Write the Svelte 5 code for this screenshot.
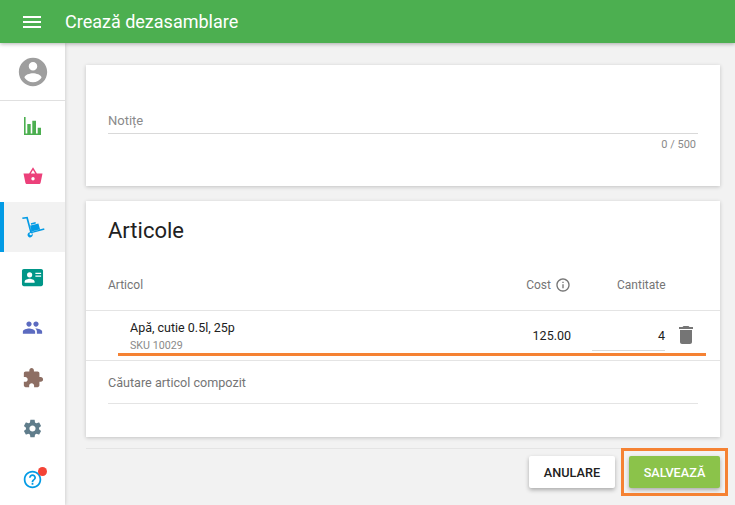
<script>
  const nav = [
    { c: '#4caf50', s: 24, nudge: true, d: 'M3 2h1.600v16.500h1.700V9h3.400v9.500h1.600V5.700H15v12.800h1.700v-5.800H20V20H3z' },
    { c: '#ec407a', s: 24, d: 'M8.100 9.500L12 3.300l3.900 6.200H21.500L19.600 18.700c-.2.8-.8 1.300-1.600 1.300H6c-.8 0-1.400-.5-1.600-1.300L2.500 9.500zM9.800 9.500h4.400L12 5.900zM12 13a1.700 1.700 0 1 0 0 3.400 1.700 1.700 0 0 0 0-3.400z' },
    { c: '#039be5', s: 24, active: true, d: 'M1.200 2.600L6.700 1.800l3.900 14.600 12.500-3.200.4 1.600-12.400 3.300a2.600 2.600 0 1 1-2-.9L5.400 3.500l-3.900.6zM9.700 17.900a1.200 1.200 0 1 0 .1 2.400 1.200 1.200 0 0 0-.1-2.400zM8.700 10.800l8.700-2.200 1.700 5.900-8.400 2.200zM9.800 8.300l4.700-1.300.4 1.500-4.700 1.300z' },
    { c: '#009688', s: 23, d: 'M3 3h18c1.100 0 2 .9 2 2v14c0 1.100-.9 2-2 2H3c-1.100 0-2-.9-2-2V5c0-1.100.9-2 2-2zm6 3.500a2.700 2.700 0 1 0 0 5.400 2.700 2.700 0 0 0 0-5.400zM3.800 17.500h10.400v-1.200c0-2-3.500-3-5.200-3s-5.200 1-5.200 3zM15 7v1.300h6V7zm0 3v1.300h6V10z' },
    { c: '#5c6bc0', s: 21, d: 'M16 11c1.660 0 2.990-1.340 2.990-3S17.660 5 16 5c-1.660 0-3 1.340-3 3s1.340 3 3 3zm-8 0c1.660 0 2.990-1.340 2.990-3S9.660 5 8 5C6.340 5 5 6.340 5 8s1.340 3 3 3zm0 2c-2.330 0-7 1.170-7 3.500V19h14v-2.500c0-2.330-4.670-3.500-7-3.500zm8 0c-.29 0-.62.02-.97.05 1.160.84 1.970 1.970 1.970 3.450V19h6v-2.500c0-2.330-4.670-3.500-7-3.500z' },
    { c: '#8d6e63', s: 22, d: 'M20.500 11H19V7c0-1.100-.9-2-2-2h-4V3.500C13 2.120 11.880 1 10.500 1S8 2.120 8 3.500V5H4c-1.100 0-1.990.9-1.990 2v3.800H3.500c1.490 0 2.700 1.210 2.700 2.700s-1.210 2.700-2.700 2.700H2V20c0 1.100.9 2 2 2h3.800v-1.500c0-1.490 1.210-2.700 2.700-2.700 1.490 0 2.700 1.210 2.700 2.700V22H17c1.100 0 2-.9 2-2v-4h1.500c1.380 0 2.500-1.120 2.500-2.500S21.880 11 20.500 11z' },
    { c: '#607d8b', s: 21, nudge: true, d: 'M19.430 12.980c.04-.32.07-.64.07-.98s-.03-.66-.07-.98l2.110-1.650c.19-.15.24-.42.12-.64l-2-3.460c-.12-.22-.39-.3-.61-.22l-2.490 1c-.52-.4-1.080-.73-1.690-.98l-.38-2.650C14.460 2.180 14.250 2 14 2h-4c-.25 0-.46.18-.49.42l-.38 2.650c-.61.25-1.170.59-1.690.98l-2.490-1c-.23-.09-.49 0-.61.22l-2 3.460c-.13.22-.07.49.12.64l2.110 1.650c-.04.32-.07.65-.07.98s.03.66.07.98l-2.110 1.650c-.19.15-.24.42-.12.64l2 3.460c.12.22.39.3.61.22l2.490-1c.52.4 1.080.73 1.690.98l.38 2.650c.03.24.24.42.49.42h4c.25 0 .46-.18.49-.42l.38-2.650c.61-.25 1.170-.59 1.690-.98l2.490 1c.23.09.49 0 .61-.22l2-3.460c.12-.22.07-.49-.12-.64l-2.110-1.650zM12 15.500c-1.930 0-3.500-1.570-3.500-3.500s1.570-3.500 3.500-3.500 3.500 1.570 3.500 3.500-1.570 3.500-3.500 3.500z' },
    { c: '#039be5', s: 21, nudge: true, badge: true, d: 'M11 18h2v-2h-2v2zm1-16C6.480 2 2 6.480 2 12s4.480 10 10 10 10-4.480 10-10S17.520 2 12 2zm0 18c-4.410 0-8-3.590-8-8s3.590-8 8-8 8 3.590 8 8-3.590 8-8 8zm0-14c-2.210 0-4 1.790-4 4h2c0-1.100.9-2 2-2s2 .9 2 2c0 2-3 1.750-3 5h2c0-2.250 3-2.500 3-5 0-2.210-1.790-4-4-4z' }
  ];
</script>

<div class="app">
  <header class="topbar">
    <svg class="menu" viewBox="0 0 24 24" width="24" height="24"><path fill="#fff" d="M3 18h18v-2H3v2zm0-5h18v-2H3v2zm0-7v2h18V6H3z" /></svg>
    <h1>Crează dezasamblare</h1>
  </header>

  <div class="body">
    <aside class="sidebar">
      <div class="profile">
        <svg viewBox="0 0 24 24" width="34" height="34"><path fill="#9e9e9e" d="M12 2C6.480 2 2 6.480 2 12s4.480 10 10 10 10-4.480 10-10S17.520 2 12 2zm0 3c1.660 0 3 1.340 3 3s-1.340 3-3 3-3-1.340-3-3 1.340-3 3-3zm0 14.200c-2.500 0-4.710-1.280-6-3.220.03-1.990 4-3.080 6-3.080 1.990 0 5.970 1.090 6 3.080-1.290 1.940-3.500 3.220-6 3.220z" /></svg>
      </div>
      {#each nav as item}
        <div class="nav-item" class:active={item.active}>
          <span class="icon" class:nudge={item.nudge}>
            <svg viewBox="0 0 24 24" width={item.s} height={item.s}><path fill={item.c} fill-rule="evenodd" d={item.d} /></svg>
            {#if item.badge}<span class="badge"></span>{/if}
          </span>
        </div>
      {/each}
    </aside>

    <main class="content">
      <section class="card notes">
        <div class="field-label">Notițe</div>
        <div class="counter">0 / 500</div>
      </section>

      <section class="card items">
        <h2>Articole</h2>
        <div class="row head">
          <span class="col-name">Articol</span>
          <span class="col-cost">Cost
            <svg viewBox="0 0 24 24" width="16" height="16"><path fill="#757575" d="M11 17h2v-6h-2v6zm1-15C6.480 2 2 6.480 2 12s4.480 10 10 10 10-4.480 10-10S17.520 2 12 2zm0 18c-4.410 0-8-3.590-8-8s3.590-8 8-8 8 3.590 8 8-3.590 8-8 8zM11 9h2V7h-2v2z" /></svg>
          </span>
          <span class="col-qty">Cantitate</span>
        </div>
        <div class="row item">
          <div class="col-name name-cell">
            <div class="name">Apă, cutie 0.5l, 25p</div>
            <div class="sku">SKU 10029</div>
          </div>
          <span class="cost-val">125.00</span>
          <span class="qty-val">4</span>
          <svg class="trash" viewBox="0 0 24 24" width="24" height="24"><path fill="#757575" d="M6 19c0 1.100.9 2 2 2h8c1.100 0 2-.9 2-2V7H6v12zM19 4h-3.500l-1-1h-5l-1 1H5v2h14V4z" /></svg>
          <span class="underline"></span>
        </div>
        <div class="search">Căutare articol compozit</div>
      </section>

      <footer class="actions">
        <button class="cancel">ANULARE</button>
        <span class="save-wrap">
          <button class="save">SALVEAZĂ</button>
          <span class="highlight"></span>
        </span>
      </footer>
    </main>
  </div>
</div>

<style>
  :global(body) {
    margin: 0;
    background: #f2f2f2;
    font-family: Roboto, "Liberation Sans", sans-serif;
    overflow: hidden;
  }
  .app {
    width: 735px;
    height: 505px;
    display: flex;
    flex-direction: column;
    overflow: hidden;
  }
  .topbar {
    position: relative;
    z-index: 2;
    height: 43px;
    flex: none;
    background: #4caf50;
    display: flex;
    align-items: center;
    padding-left: 20px;
    box-shadow: 0 1px 4px rgba(0, 0, 0, 0.3);
  }
  .menu { flex: none; }
  h1 {
    margin: 0 0 0 21px;
    color: #fff;
    font-size: 18px;
    font-weight: 400;
  }
  .body { flex: 1; display: flex; min-height: 0; }
  .sidebar {
    width: 65px;
    flex: none;
    background: #fff;
    box-shadow: 0 0 4px rgba(0, 0, 0, 0.2);
    z-index: 1;
  }
  .profile {
    display: flex;
    align-items: center;
    justify-content: center;
    border-bottom: 1px solid #e0e0e0;
    padding-top: 1px;
    box-sizing: border-box;
    height: 58px;
  }
  .nav-item {
    height: 50.3px;
    display: flex;
    align-items: center;
    justify-content: center;
    box-sizing: border-box;
  }
  .nav-item.active {
    background: #f2f2f2;
    border-left: 4px solid #039be5;
    padding-right: 4px;
  }
  .icon { position: relative; display: flex; }
  .icon.nudge { padding-top: 2px; }
  .badge {
    position: absolute;
    top: 0;
    right: -4px;
    width: 9px;
    height: 9px;
    border-radius: 50%;
    background: #f44336;
  }
  .content {
    flex: 1;
    min-width: 0;
    padding: 22px 15px 0 21px;
    box-sizing: border-box;
  }
  .card {
    background: #fff;
    box-shadow: 0 1px 4px rgba(0, 0, 0, 0.2);
    padding: 0 22px;
  }
  .notes {
    height: 121px;
    box-sizing: border-box;
    padding-top: 48px;
    margin-bottom: 15px;
  }
  .field-label {
    font-size: 13px;
    line-height: 15px;
    color: #8a8a8a;
    padding-bottom: 5px;
    border-bottom: 1px solid #d9d9d9;
  }
  .counter {
    margin-top: 4px;
    text-align: right;
    font-size: 11px;
    line-height: 13px;
    color: #8a8a8a;
    padding-right: 2px;
  }
  .items {
    height: 236px;
    box-sizing: border-box;
    padding-top: 17px;
  }
  h2 {
    margin: 0;
    font-size: 22px;
    font-weight: 400;
    line-height: 26px;
    color: #212121;
  }
  .row {
    display: flex;
    align-items: center;
    margin: 0 -22px;
    padding: 0 22px;
    position: relative;
  }
  .head {
    height: 67px;
    box-sizing: border-box;
    padding-top: 16px;
    font-size: 12px;
    color: #757575;
    border-bottom: 1px solid #e4e4e4;
  }
  .col-name { flex: 1; min-width: 0; }
  .col-cost {
    display: flex;
    align-items: center;
    gap: 4px;
    margin-right: 46px;
  }
  .col-qty { width: 48px; margin-right: 33px; white-space: nowrap; }
  .item {
    height: 50px;
    box-sizing: border-box;
    border-bottom: 1px solid #e4e4e4;
    color: #212121;
  }
  .name-cell { padding-left: 22px; }
  .name { font-size: 12.5px; line-height: 16px; margin-top: 1px; }
  .sku { font-size: 10.7px; line-height: 13px; margin-top: 3px; color: #8a8a8a; }
  .cost-val { font-size: 12.5px; margin-right: 21px; }
  .qty-val {
    width: 73px;
    height: 30px;
    box-sizing: border-box;
    font-size: 12.5px;
    line-height: 29px;
    text-align: right;
    border-bottom: 1px solid #d9d9d9;
    margin-right: 9px;
    margin-top: 1px;
  }
  .trash { flex: none; margin-top: -2px; }
  .underline {
    position: absolute;
    left: 32px;
    right: 14px;
    bottom: 4px;
    height: 3px;
    background: #f58233;
  }
  .search {
    margin-top: 14px;
    font-size: 12.6px;
    line-height: 15px;
    color: #757575;
    padding-bottom: 13px;
    border-bottom: 1px solid #e4e4e4;
  }
  .actions {
    margin-top: 11px;
    padding-top: 7px;
    border-top: 1px solid #e4e4e4;
    display: flex;
    justify-content: flex-end;
    gap: 14px;
  }
  button {
    height: 32px;
    border: 0;
    border-radius: 2px;
    font-family: inherit;
    font-size: 12.7px;
    font-weight: 500;
    box-shadow: 0 2px 4px rgba(0, 0, 0, 0.3);
    padding: 0;
  }
  .cancel { width: 86px; background: #fff; color: #212121; }
  .save { width: 91px; background: #8bc34a; color: #fff; display: block; }
  .save-wrap { position: relative; display: block; }
  .highlight {
    position: absolute;
    inset: -8px;
    border: 3px solid #f58233;
    pointer-events: none;
  }
</style>
